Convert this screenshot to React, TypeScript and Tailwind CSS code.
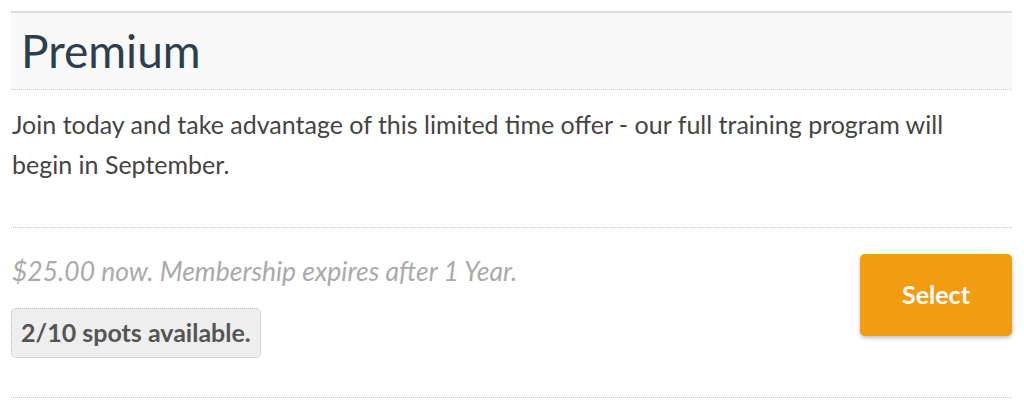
export default function App() {
  return (
    <div className="w-[1024px] h-[408px] bg-white pt-[11px] pl-[11px] pr-[12px]" style={{ fontFamily: "Lato, 'Open Sans', sans-serif" }}>
      <div className="w-full">
        <div className="border-t-2 border-t-[#dcdcdc] bg-[#f9f9f9] border-b border-b-[#c8c8c8] h-[79px] flex items-center pl-[10px]" style={{ borderTopStyle: "solid", borderBottomStyle: "dotted" }}>
          <h1 className="text-[46px] leading-none text-[#2c3e50] font-normal">Premium</h1>
        </div>
        <div className="pt-[14px] pb-[43px] border-b border-dotted border-[#c8c8c8]">
          <p className="text-[25px] leading-[40px] text-[#444] pl-[1px] pr-[40px]">
            Join today and take advantage of this limited time offer - our full training program will begin in September.
          </p>
        </div>
        <div className="flex justify-between border-b border-dotted border-[#c8c8c8] h-[170px]">
          <div className="pt-[23px]">
            <p className="text-[26.5px] leading-[40px] italic text-[#aaa] pl-[1px]">$25.00 now. Membership expires after 1 Year.</p>
            <div className="mt-[17px] inline-flex items-center h-[50px] px-[9px] bg-[#eeeeee] border border-dotted border-[#bbb] rounded-[5px] text-[25px] font-bold text-[#555]">
              2/10 spots available.
            </div>
          </div>
          <div className="pt-[26px]">
            <button className="w-[152px] h-[82px] bg-[#f39c12] rounded-[5px] text-white font-bold text-[25px] shadow-[0_2px_4px_rgba(0,0,0,0.25)]">
              Select
            </button>
          </div>
        </div>
      </div>
    </div>
  );
}
